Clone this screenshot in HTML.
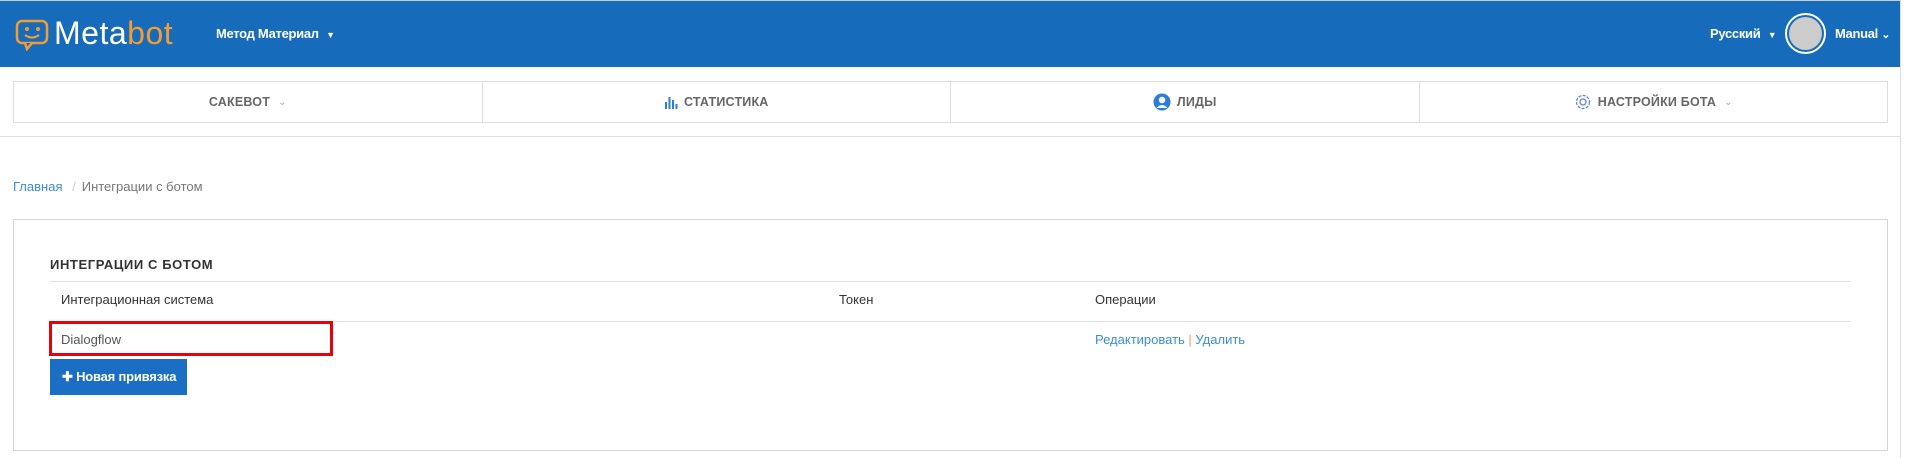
<!DOCTYPE html>
<html><head><meta charset="utf-8"><style>
*{box-sizing:border-box;margin:0;padding:0}
body{width:1906px;height:458px;background:#fff;font-family:"Liberation Sans",sans-serif;position:relative;overflow:hidden;color:#333}
.hdr{position:absolute;left:0;top:0;width:1900px;height:67px;background:#166bbb;border-top:1px solid #ccc}
.rs{position:absolute;left:1900px;top:0;width:6px;height:458px;background:#fff;border-left:1px solid #ddd}
.abs{position:absolute;white-space:nowrap}
.navwrap{position:absolute;left:0;top:67px;width:1900px;height:70px;border-bottom:1px solid #ddd}
.nav{position:absolute;left:13px;top:14px;width:1875px;height:42px;border:1px solid #ddd;display:flex}
.nav div{flex:1;border-left:1px solid #ddd;display:flex;align-items:center;justify-content:center;font-size:12.5px;font-weight:bold;color:#666;letter-spacing:.2px}
.nav div:first-child{border-left:none}
.chev{color:#aaa;font-weight:normal;font-size:10px;margin-left:8px}
.panel{position:absolute;left:13px;top:219px;width:1875px;height:232px;border:1px solid #d5d5d5}
.line{position:absolute;left:50px;width:1801px;height:1px;background:#e2e2e2}
.ht{font-size:13px;font-weight:bold;color:#fff;letter-spacing:-.3px}
</style></head><body>
<div class="hdr"></div>
<div class="rs"></div>
<svg class="abs" style="left:15px;top:19px" width="36" height="32" viewBox="0 0 36 32"><rect x="2" y="2" width="30" height="22" rx="5" fill="none" stroke="#f39c33" stroke-width="2.5"/><path d="M10 24 L12 30 L17 24" fill="#166bbb" stroke="#f39c33" stroke-width="2.5"/><circle cx="12" cy="10" r="2" fill="#f39c33"/><circle cx="23" cy="10" r="2" fill="#f39c33"/><path d="M10 16 Q17 21 24 16" fill="none" stroke="#f39c33" stroke-width="2.3"/></svg>
<div class="abs" style="left:54px;top:15px;font-size:32px;color:#fff;letter-spacing:.5px">Meta<span style="color:#f39c33">bot</span></div>
<div class="abs ht" style="left:216px;top:26px">Метод Материал <span style="font-size:9px;margin-left:4px">▼</span></div>
<div class="abs ht" style="left:1710px;top:26px">Русский <span style="font-size:9px;margin-left:4px">▼</span></div>
<div class="abs" style="left:1785px;top:13px;width:41px;height:41px;border-radius:50%;border:2px solid #fff;background:#166bbb"><div style="position:absolute;left:2px;top:2px;width:33px;height:33px;border-radius:50%;background:#ccc"></div></div>
<div class="abs ht" style="left:1835px;top:26px">Manual <span style="font-size:11px">⌄</span></div>
<div class="navwrap"><div class="nav">
<div>САКЕВОТ<span class="chev">⌄</span></div>
<div><svg width="14" height="14" viewBox="0 0 14 14" style="margin-right:6px"><rect x="1" y="7" width="2" height="7" fill="#2b7ddc"/><rect x="4.5" y="2" width="2" height="12" fill="#2b7ddc"/><rect x="8" y="5" width="2" height="9" fill="#2b7ddc"/><rect x="11.5" y="9" width="2" height="5" fill="#2b7ddc"/></svg>СТАТИСТИКА</div>
<div><svg width="18" height="18" viewBox="0 0 18 18" style="margin-right:6px"><circle cx="9" cy="9" r="8.5" fill="#2b7ddc"/><circle cx="9" cy="7" r="3.2" fill="#fff"/><path d="M3.5 15 Q9 9 14.5 15" fill="#fff"/></svg>ЛИДЫ</div>
<div><svg width="18" height="18" viewBox="0 0 18 18" style="margin-right:6px"><circle cx="9" cy="9" r="6.5" fill="none" stroke="#6b7fe0" stroke-width="1.3" stroke-dasharray="3 1.3"/><circle cx="9" cy="9" r="3" fill="none" stroke="#6b7fe0" stroke-width="1.3"/></svg>НАСТРОЙКИ БОТА<span class="chev">⌄</span></div>
</div></div>
<div class="abs" style="left:13px;top:179px;font-size:13px;color:#3c8dde">Главная <span style="color:#ccc;margin:0 6px">/</span><span style="color:#777">Интеграции с ботом</span></div>
<div class="panel"></div>
<div class="abs" style="left:50px;top:257px;font-size:13px;font-weight:bold;color:#333;letter-spacing:.6px">ИНТЕГРАЦИИ С БОТОМ</div>
<div class="line" style="top:281px"></div>
<div class="abs" style="left:61px;top:292px;font-size:13px;color:#333">Интеграционная система</div>
<div class="abs" style="left:839px;top:292px;font-size:13px;color:#333">Токен</div>
<div class="abs" style="left:1095px;top:292px;font-size:13px;color:#333">Операции</div>
<div class="line" style="top:321px"></div>
<div class="abs" style="left:49px;top:321px;width:284px;height:35px;border:3px solid #e8000b"></div>
<div class="abs" style="left:61px;top:332px;font-size:13px;color:#555">Dialogflow</div>
<div class="abs" style="left:1095px;top:332px;font-size:13px;color:#3c8dde">Редактировать <span style="color:#f0a050">|</span> Удалить</div>
<div class="abs" style="left:50px;top:359px;width:137px;height:36px;background:#1a6fc4;color:#fff;font-size:13px;font-weight:bold;padding:10px 0 0 12px;letter-spacing:-.2px">✚ Новая привязка</div>
</body></html>
